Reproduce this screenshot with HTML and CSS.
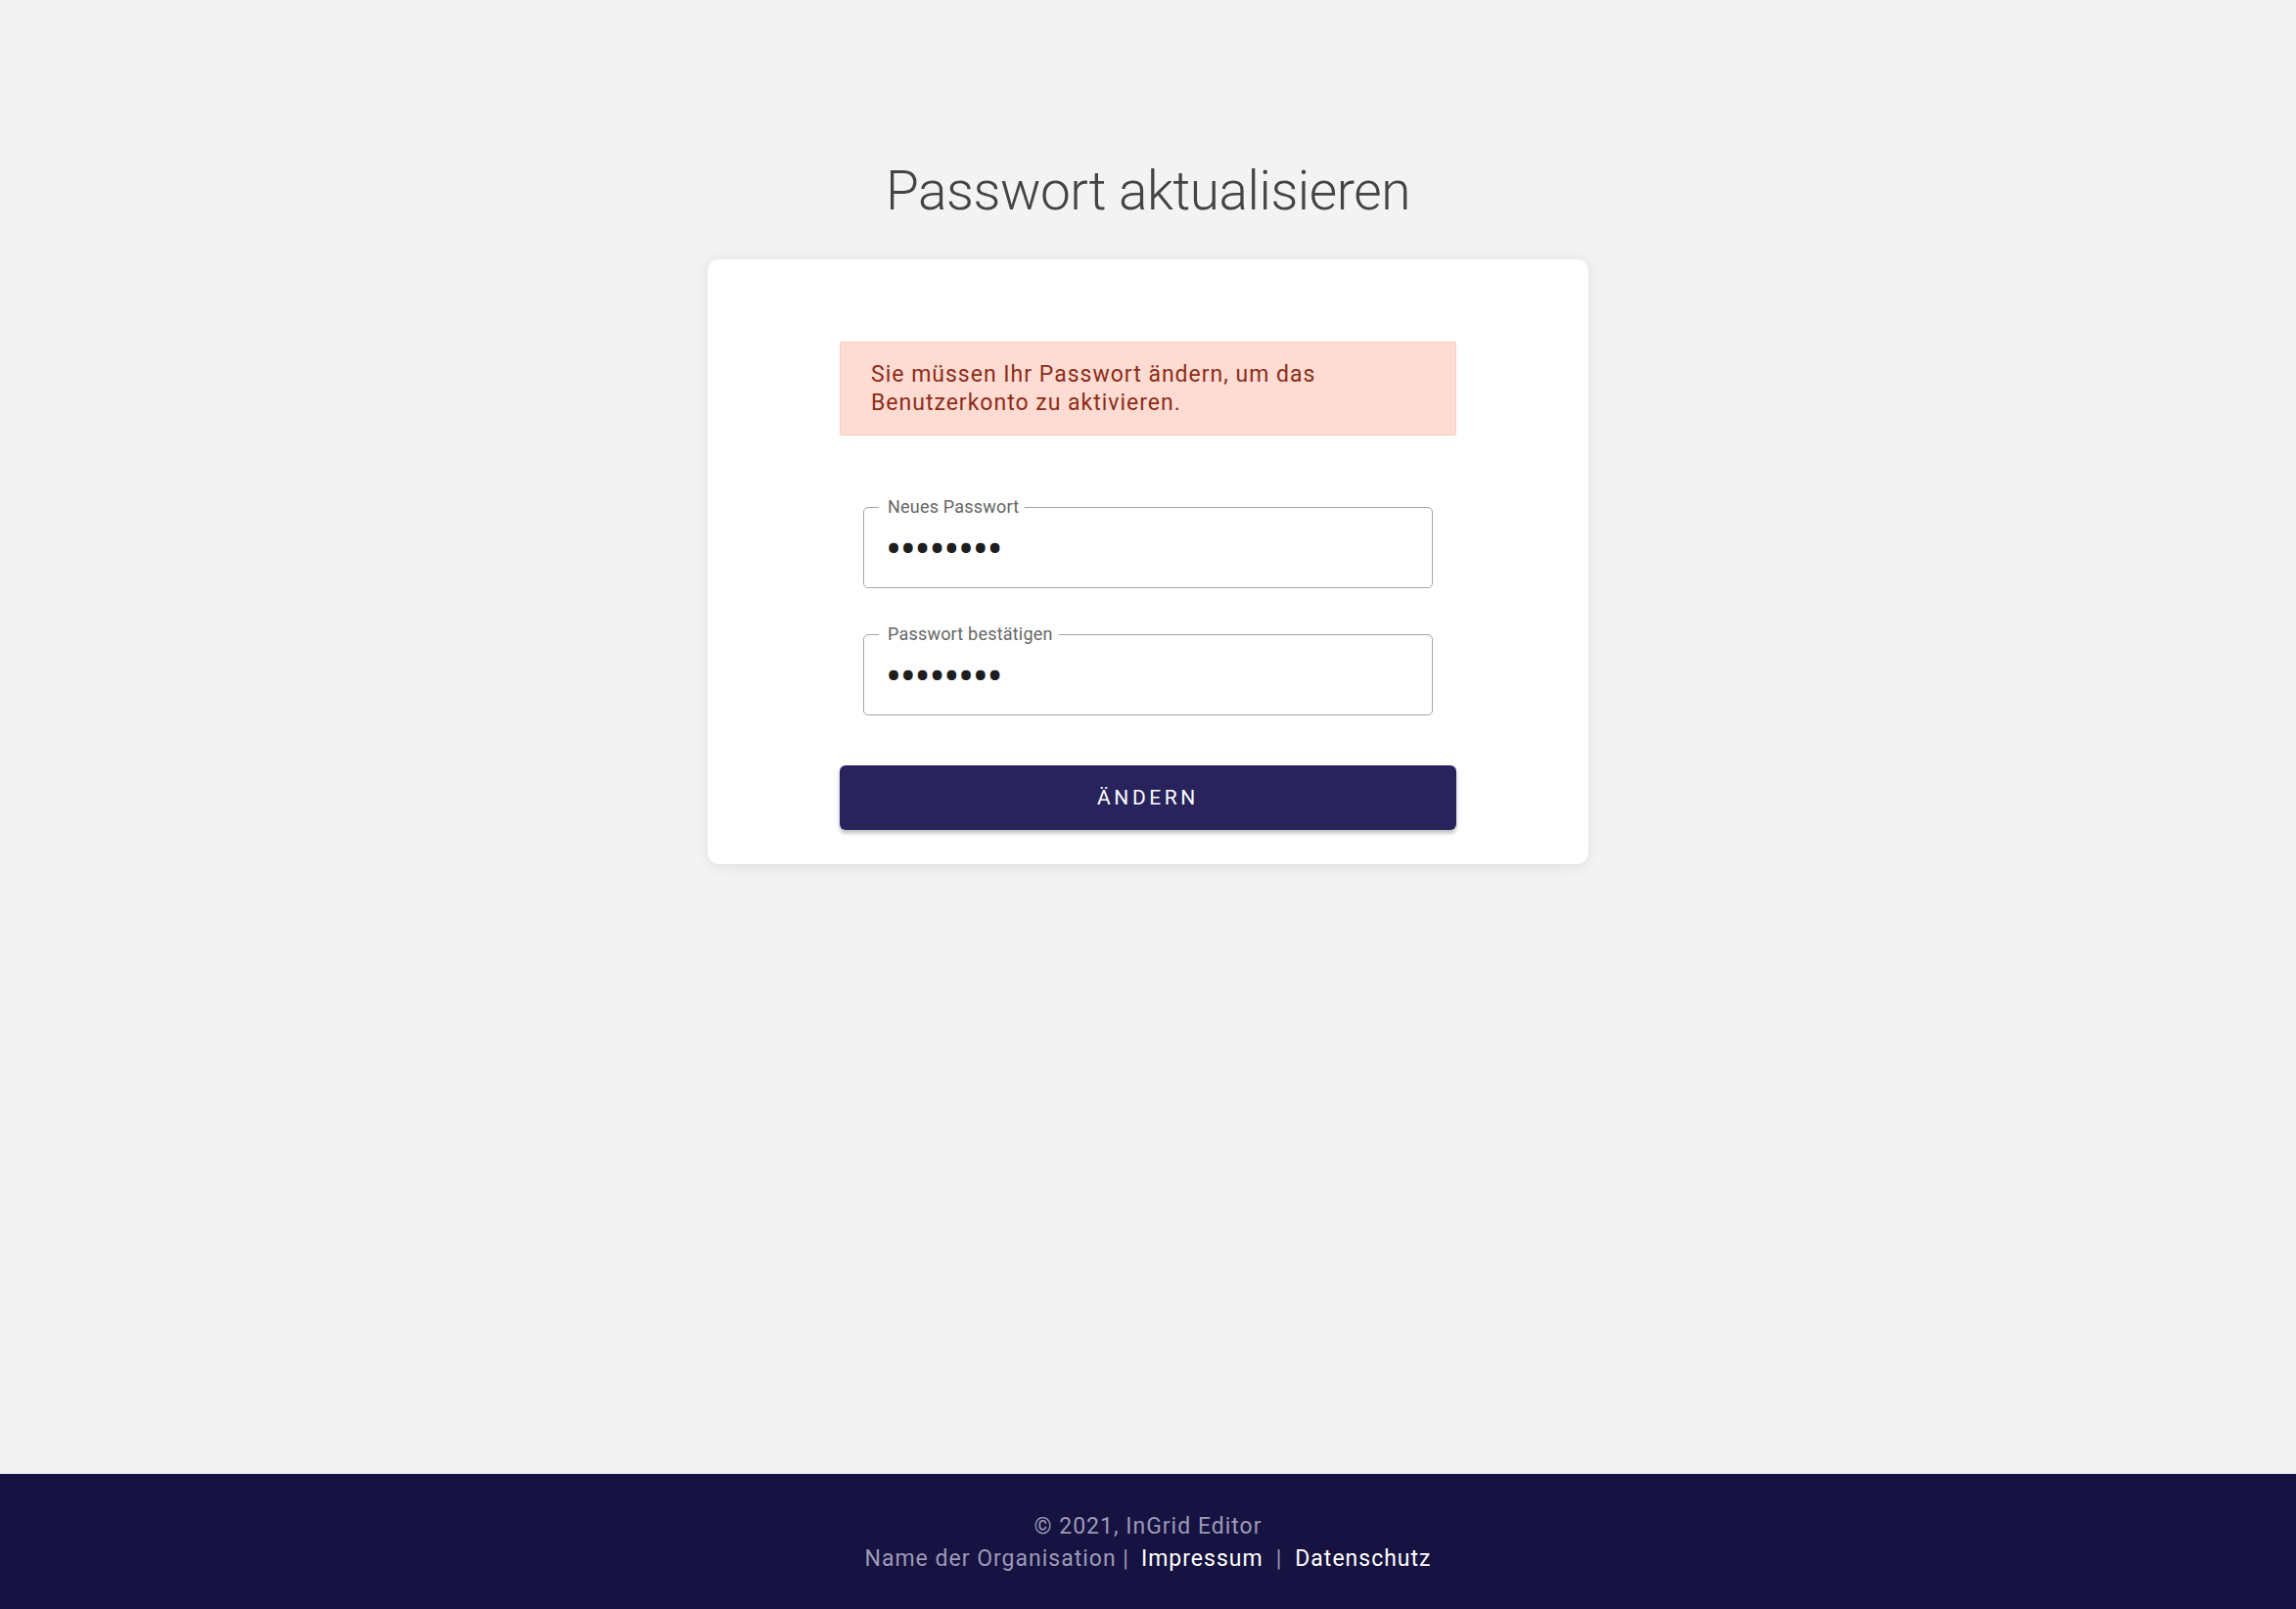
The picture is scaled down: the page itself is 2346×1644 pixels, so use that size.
FILE: index.html
```html
<!DOCTYPE html>
<html lang="de">
<head>
<meta charset="utf-8">
<title>Passwort aktualisieren</title>
<link rel="stylesheet" href="styles.css">
</head>
<body>
<main class="main">
  <h1 class="title">Passwort aktualisieren</h1>
  <div class="card">
    <div class="alert">Sie müssen Ihr Passwort ändern, um das Benutzerkonto zu aktivieren.</div>
    <form class="form">
      <fieldset class="field">
        <legend class="field-label">Neues Passwort</legend>
        <input class="field-input" type="password" value="password" readonly>
      </fieldset>
      <fieldset class="field field-second">
        <legend class="field-label">Passwort bestätigen</legend>
        <input class="field-input" type="password" value="password" readonly>
      </fieldset>
      <button class="submit" type="button">Ändern</button>
    </form>
  </div>
</main>
<footer class="footer">
  <div class="footer-line">© 2021, InGrid Editor</div>
  <div class="footer-line">Name der Organisation |<a class="footer-link first" href="#">Impressum</a><span class="sep">|</span><a class="footer-link" href="#">Datenschutz</a></div>
</footer>
</body>
</html>
```
FILE: styles.css
```css
html, body {
  margin: 0;
  padding: 0;
}
body {
  min-height: 100vh;
  display: flex;
  flex-direction: column;
  background: #f3f3f3;
  font-family: Roboto, "Liberation Sans", sans-serif;
}
.main {
  flex: 1;
  display: flex;
  flex-direction: column;
  align-items: center;
  padding-top: 163px;
}
.title {
  margin: 0;
  font-size: 55px;
  line-height: 64px;
  font-weight: 300;
  letter-spacing: -0.45px;
  color: #444;
}
.card {
  margin-top: 38px;
  width: 900px;
  box-sizing: border-box;
  padding: 84px 135px 35px;
  background: #fff;
  border-radius: 12px;
  box-shadow: 0 2px 14px rgba(0, 0, 0, 0.10);
}
.alert {
  box-sizing: border-box;
  height: 96px;
  padding: 18px 31px;
  background: #ffdcd3;
  border: 1px solid #fdcabd;
  border-radius: 2px;
  color: #8c2c17;
  font-size: 23px;
  line-height: 29px;
  letter-spacing: 1px;
}
.form {
  display: flex;
  flex-direction: column;
  margin-top: 63px;
}
.field {
  margin: 0 24px;
  padding: 16px 24px 26px 15px;
  border: 1px solid #a4a4a4;
  border-radius: 5px;
  min-width: 0;
}
.field-second {
  margin-top: 37px;
}
.field-label {
  padding: 0 6px 0 9px;
  font-size: 18px;
  line-height: 20px;
  color: #666;
  letter-spacing: 0.2px;
}
.field-input {
  display: block;
  width: 100%;
  box-sizing: border-box;
  height: 30px;
  margin: 0;
  padding: 5px 9px 0 7px;
  border: none;
  outline: none;
  background: transparent;
  font-family: Roboto, "Liberation Sans", sans-serif;
  font-size: 48px;
  letter-spacing: -1.4px;
  color: #1e1e1e;
}
.submit {
  margin-top: 51px;
  height: 66px;
  border: none;
  border-radius: 6px;
  background: #28235c;
  color: #fff;
  font-family: Roboto, "Liberation Sans", sans-serif;
  font-size: 21px;
  font-weight: 400;
  letter-spacing: 3.6px;
  text-transform: uppercase;
  box-shadow: 0 3px 4px rgba(0, 0, 0, 0.28);
  cursor: pointer;
}
.footer {
  background: #161241;
  padding: 37px 0 35px;
  text-align: center;
  color: #9c9ab6;
  font-size: 23px;
  line-height: 33px;
  letter-spacing: 1px;
}
.footer-link {
  color: #fff;
  text-decoration: none;
}
.footer-link.first {
  margin-left: 12px;
}
.sep {
  margin: 0 13px;
}
```
